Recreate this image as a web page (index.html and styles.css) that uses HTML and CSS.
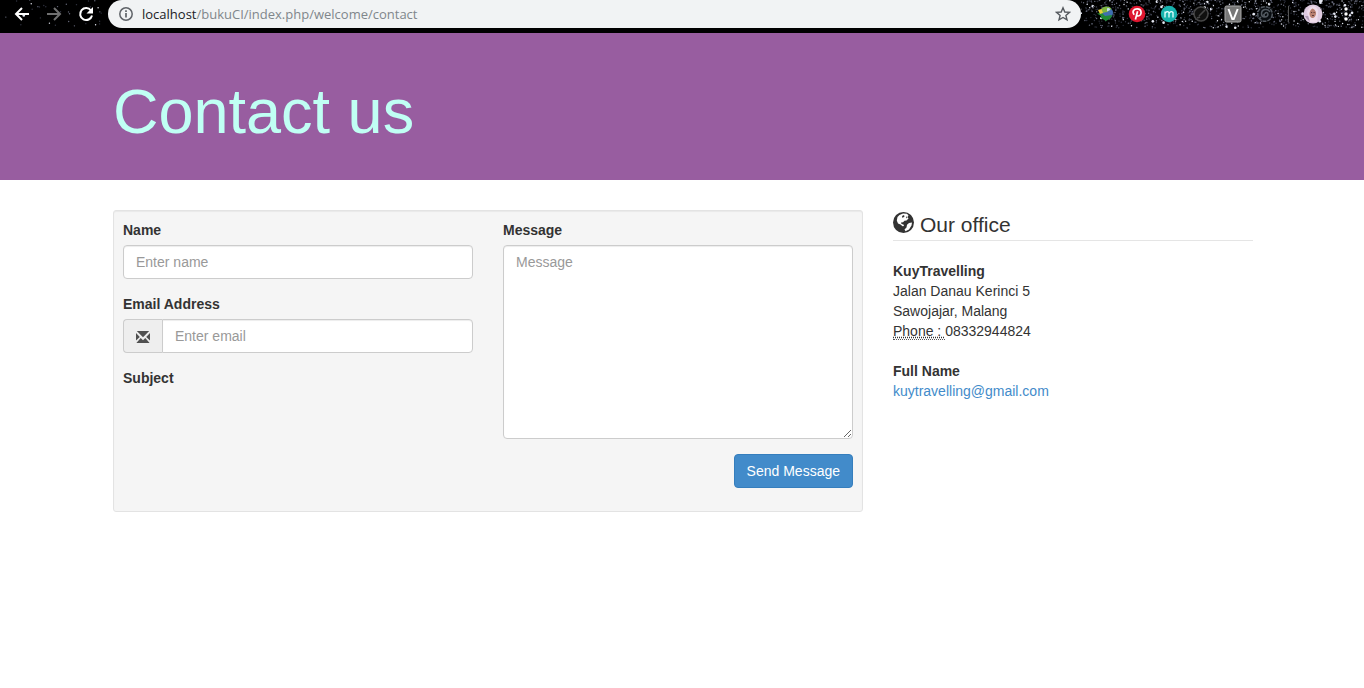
FILE: index.html
```html
<!DOCTYPE html>
<html lang="en">
<head>
<meta charset="utf-8">
<title>Contact us</title>
<link rel="stylesheet" href="styles.css">
</head>
<body>
<header class="browser">
  <nav class="browser-nav" aria-label="Browser navigation">
    <svg class="stars" data-count="34" data-seed="7" aria-hidden="true"></svg>
    <button class="tool" aria-label="Back"><svg width="16" height="16" viewBox="0 0 16 16" fill="none" stroke="#fff" stroke-width="2"><path d="M15 8H2M8 2L2 8l6 6"/></svg></button>
    <button class="tool" aria-label="Forward"><svg width="16" height="16" viewBox="0 0 16 16" fill="none" stroke="#707070" stroke-width="2"><path d="M1 8h13M8 2l6 6-6 6"/></svg></button>
    <button class="tool" aria-label="Reload"><svg width="16" height="16" viewBox="0 0 16 16"><path d="M13 4.5A6 6 0 1 0 14 9.5" fill="none" stroke="#fff" stroke-width="2"/><path d="M15 1v6.5H8.500z" fill="#fff"/></svg></button>
  </nav>
  <div class="address-bar">
    <svg width="16" height="16" viewBox="0 0 16 16" fill="none" stroke="#5f6368" aria-hidden="true"><circle cx="8" cy="8" r="6.200" stroke-width="1.500"/><path d="M8 7v4.500M8 4.200V6" stroke-width="1.700"/></svg>
    <p class="url"><span class="host">localhost</span>/bukuCI/index.php/welcome/contact</p>
    <button class="bookmark" aria-label="Bookmark this page"><svg width="16" height="16" viewBox="0 0 16 16" fill="none" stroke="#55595e" stroke-width="1.400"><path d="M8 1.800l1.800 4.200 4.700.4-3.600 3 1.100 4.500L8 11.500l-4 2.400 1.100-4.500-3.600-3 4.700-.4z"/></svg></button>
  </div>
  <div class="extensions">
    <svg class="stars" data-count="900" data-seed="23" aria-hidden="true"></svg>
    <button class="tool" aria-label="Download manager"><svg width="18" height="18" viewBox="0 0 18 18"><circle cx="10.500" cy="8" r="6.500" fill="#3f6fb0"/><path d="M5 4.500c2-3.500 8-4 10.500-.5L11 7 6 8z" fill="#7db53e"/><path d="M11 3.500c2-1 3 0 3 1.500l-3 1.500z" fill="#c3dcf0"/><path d="M1 8.500l5-.5 3 3 7-1-1 3-5 3-6-3.500 2-1z" fill="#1f8a35"/><path d="M2 5l3.500-1L7 8 4 9z" fill="#e3cd3b"/></svg></button>
    <button class="tool" aria-label="Pinterest"><svg width="18" height="18" viewBox="0 0 18 18"><circle cx="9" cy="9" r="8.300" fill="#df1730"/><path d="M6.200 9.800C3.600 6.500 6 3.800 9.200 3.800c5.200 0 4.800 7.200 1 7.200-1 0-1.800-.7-1.800-1.300M9.600 6.200L7.400 14.500" fill="none" stroke="#fff" stroke-width="1.700"/></svg></button>
    <button class="tool" aria-label="Extension m"><svg width="18" height="18" viewBox="0 0 18 18"><circle cx="9" cy="9" r="8.200" fill="#17b3ae"/><path d="M5 12.500V6.500M5 8.500Q7 5.200 9 7.500v5M9 8.500Q11 5.200 13 7.500v5" fill="none" stroke="#e5ffff" stroke-width="1.300"/></svg></button>
    <button class="tool" aria-label="Speed test"><svg width="18" height="18" viewBox="0 0 18 18" fill="#10100f" stroke="#454545" stroke-width="1.600"><circle cx="9" cy="9" r="7"/><path d="M7 11l6-6M5 13l3-1"/></svg></button>
    <button class="tool" aria-label="Extension V"><svg width="18" height="18" viewBox="0 0 18 18"><rect x="1" y="1" width="16" height="16" rx="1.500" fill="#777" stroke="#aaa"/><path d="M4.500 4L8.300 14h1.400l4-10" fill="none" stroke="#fff" stroke-width="2"/></svg></button>
    <button class="tool" aria-label="Extension spiral"><svg width="18" height="18" viewBox="0 0 18 18" fill="none" stroke="#525960" stroke-width="1.500"><circle cx="9" cy="9" r="7.300" fill="#090c10" stroke-dasharray="4 1"/><path d="M9 9c0-2 3-2 3 .3 0 3.700-6.500 3.700-6.500-.5C5.500 4 12 3 14 7M9 9c-2 0-1 2 0 1.500M5 12l-2 2"/></svg></button>
    <span class="divider"></span>
    <button class="tool profile" aria-label="Profile"><svg width="20" height="20" viewBox="0 0 20 20"><circle cx="10" cy="10" r="9.500" fill="#dfcbe0"/><path d="M2 12q3 5 6 6l-2-6z" fill="#ae9ab3"/><path d="M4 8q2-6 7-6 5 2 4 8l-1 8H7z" fill="#efdcea"/><path d="M9.500 4.500q4 2 3.500 5.500-1 4-3.500 4T6.500 10q0-4 3-5.500z" fill="#b98070"/><path d="M8 8.500h1.200M10.500 8.500h1.200M9 11.500h2" stroke="#5e3b3b"/></svg></button>
    <button class="tool" aria-label="Menu"><svg width="18" height="18" viewBox="0 0 18 18" fill="#fff"><circle cx="9" cy="4" r="1.700"/><circle cx="9" cy="9" r="1.700"/><circle cx="9" cy="14" r="1.700"/></svg></button>
  </div>
</header>

<section class="banner">
  <div class="container"><h1>Contact us</h1></div>
</section>

<main class="container content">
  <form class="well">
    <div class="column">
      <div class="field">
        <label for="name">Name</label>
        <input class="control" type="text" id="name" placeholder="Enter name">
      </div>
      <div class="field">
        <label for="email">Email Address</label>
        <div class="input-group">
          <span class="addon"><svg width="14" height="14" viewBox="0 0 14 14" fill="#505050" aria-hidden="true"><path d="M.8 1h12.400L7 7.200zM0 3l3.800 4L0 10.600zM14 3l-3.800 4 3.800 3.600zM4.700 7.900L7 10.200l2.300-2.300L13.600 13H.4z"/></svg></span>
          <input class="control" type="email" id="email" placeholder="Enter email">
        </div>
      </div>
      <h2 class="subject">Subject</h2>
    </div>
    <div class="column">
      <div class="field">
        <label for="message">Message</label>
        <textarea class="control" id="message" rows="9" placeholder="Message"></textarea>
      </div>
      <button class="send" type="submit">Send Message</button>
    </div>
  </form>
  <aside class="office">
    <h2 class="legend"><svg width="21" height="21" viewBox="0 0 21 21" aria-hidden="true"><circle cx="10.500" cy="10.500" r="10.500" fill="#333"/><path d="M6.500 3l3.500-1.500 4 .3 1.500 1.700-1 1.500 1 1.500-2 2-2 .3-1.500 1.500-2 .2.500 1.500 2 .5.500 1.500-1.500.3-2-1.800L5 11.500 3.800 8.500 4.500 5z" fill="#fff"/><path d="M14 12.800l2-1.800 3-.5-.5 3-2.500 4-3.500 1.700-1-1.700 2-2z" fill="#fff"/><path d="M9 4l2-1 .5 1.500L9.500 6zM13 4.500l1.500.5-1 1.500z" fill="#333"/></svg>Our office</h2>
    <address>
      <strong>KuyTravelling</strong><br>
      Jalan Danau Kerinci 5<br>
      Sawojajar, Malang<br>
      <abbr title="Phone">Phone : </abbr>08332944824
    </address>
    <address>
      <strong>Full Name</strong><br>
      <a href="mailto:kuytravelling@gmail.com">kuytravelling@gmail.com</a>
    </address>
  </aside>
</main>
<script src="stars.js"></script>
</body>
</html>
```
FILE: styles.css
```css
* { box-sizing: border-box; }
body {
  margin: 0;
  background: #fff;
  color: #333;
  font: 14px/20px "Liberation Sans", Arial, sans-serif;
}
button { font: inherit; border: 0; padding: 0; background: none; cursor: pointer; }
svg { display: block; flex: none; }

.browser { display: flex; height: 33px; background: #000; }
.browser-nav, .extensions { position: relative; display: flex; align-items: center; padding-bottom: 5px; }
.browser-nav { width: 108px; padding-left: 14px; gap: 16px; }
.stars { position: absolute; inset: 0; width: 100%; height: 100%; }
.tool { position: relative; }
.address-bar {
  flex: 1;
  display: flex;
  align-items: center;
  height: 28px;
  padding: 0 10px;
  border-radius: 14px;
  background: #f1f3f4;
}
.url { flex: 1; margin: 0 0 0 8px; color: #80868b; font: 13px/20px "Open Sans", "Noto Sans", sans-serif; }
.host { color: #202124; }
.extensions { width: 283px; padding-left: 15px; gap: 14px; }
.divider { position: relative; width: 1px; height: 16px; background: #555; }

.container { max-width: 1170px; margin: 0 auto; padding: 0 14px 0 16px; }
.banner { padding: 47px 0 37px; background: #985da0; }
h1 { margin: 0; color: #c0fff4; font-size: 63px; font-weight: 400; line-height: 63px; }

.content {
  display: grid;
  grid-template-columns: 25fr 12fr;
  gap: 30px;
  align-items: start;
  padding-top: 30px;
}
.well {
  display: grid;
  grid-template-columns: 1fr 1fr;
  gap: 30px;
  padding: 9px 9px 23px;
  border: 1px solid #e3e3e3;
  border-radius: 3px;
  background: #f5f5f5;
  box-shadow: inset 0 1px 1px rgba(0, 0, 0, .05);
}
.column { min-width: 0; }
.field { margin-bottom: 15px; }
label { display: block; margin-bottom: 5px; font-weight: 700; }
.subject { margin: 0; font-size: 14px; line-height: 20px; }
.control {
  display: block;
  width: 100%;
  padding: 6px 12px;
  border: 1px solid #ccc;
  border-radius: 4px;
  background: #fff;
  color: #555;
  font: inherit;
  box-shadow: inset 0 1px 1px rgba(0, 0, 0, .075);
}
input.control { height: 34px; }
.control::placeholder { color: #999; opacity: 1; }
.input-group { display: flex; }
.addon {
  display: flex;
  align-items: center;
  padding: 2px 12px 0;
  border: 1px solid #ccc;
  border-right: 0;
  border-radius: 4px 0 0 4px;
  background: #eee;
}
.input-group .control { flex: 1; min-width: 0; border-radius: 0 4px 4px 0; }
.send {
  display: block;
  margin-left: auto;
  padding: 6px 12px;
  border: 1px solid #357ebd;
  border-radius: 4px;
  background: #428bca;
  color: #fff;
}

.legend {
  display: flex;
  gap: 6px;
  margin: 0 0 20px;
  border-bottom: 1px solid #e5e5e5;
  font-size: 21px;
  font-weight: 400;
  line-height: 30px;
}
.legend svg { margin-top: 2px; }
address { margin-bottom: 20px; font-style: normal; }
abbr { border-bottom: 1px dotted #555; text-decoration: underline dotted; white-space: pre; }
a { color: #428bca; text-decoration: none; }
```
FILE: stars.js
```js
// Scatters a repeatable starfield over each toolbar section.
document.querySelectorAll('.stars').forEach(function (sky) {
  var state = Number(sky.dataset.seed);
  function random() {
    state = (state * 16807) % 2147483647;
    return state / 2147483647;
  }
  random();
  for (var i = 0; i < Number(sky.dataset.count); i++) {
    var star = document.createElementNS('http://www.w3.org/2000/svg', 'circle');
    var depth = random();
    star.setAttribute('cx', random() * 100 + '%');
    star.setAttribute('cy', Math.pow(random(), 1.3) * 85 + '%');
    star.setAttribute('r', depth > 0.97 ? 1.3 : 0.7);
    star.setAttribute('fill', depth > 0.85 ? '#e5e8f2' : depth > 0.5 ? '#66697a' : '#303340');
    sky.appendChild(star);
  }
});
```
